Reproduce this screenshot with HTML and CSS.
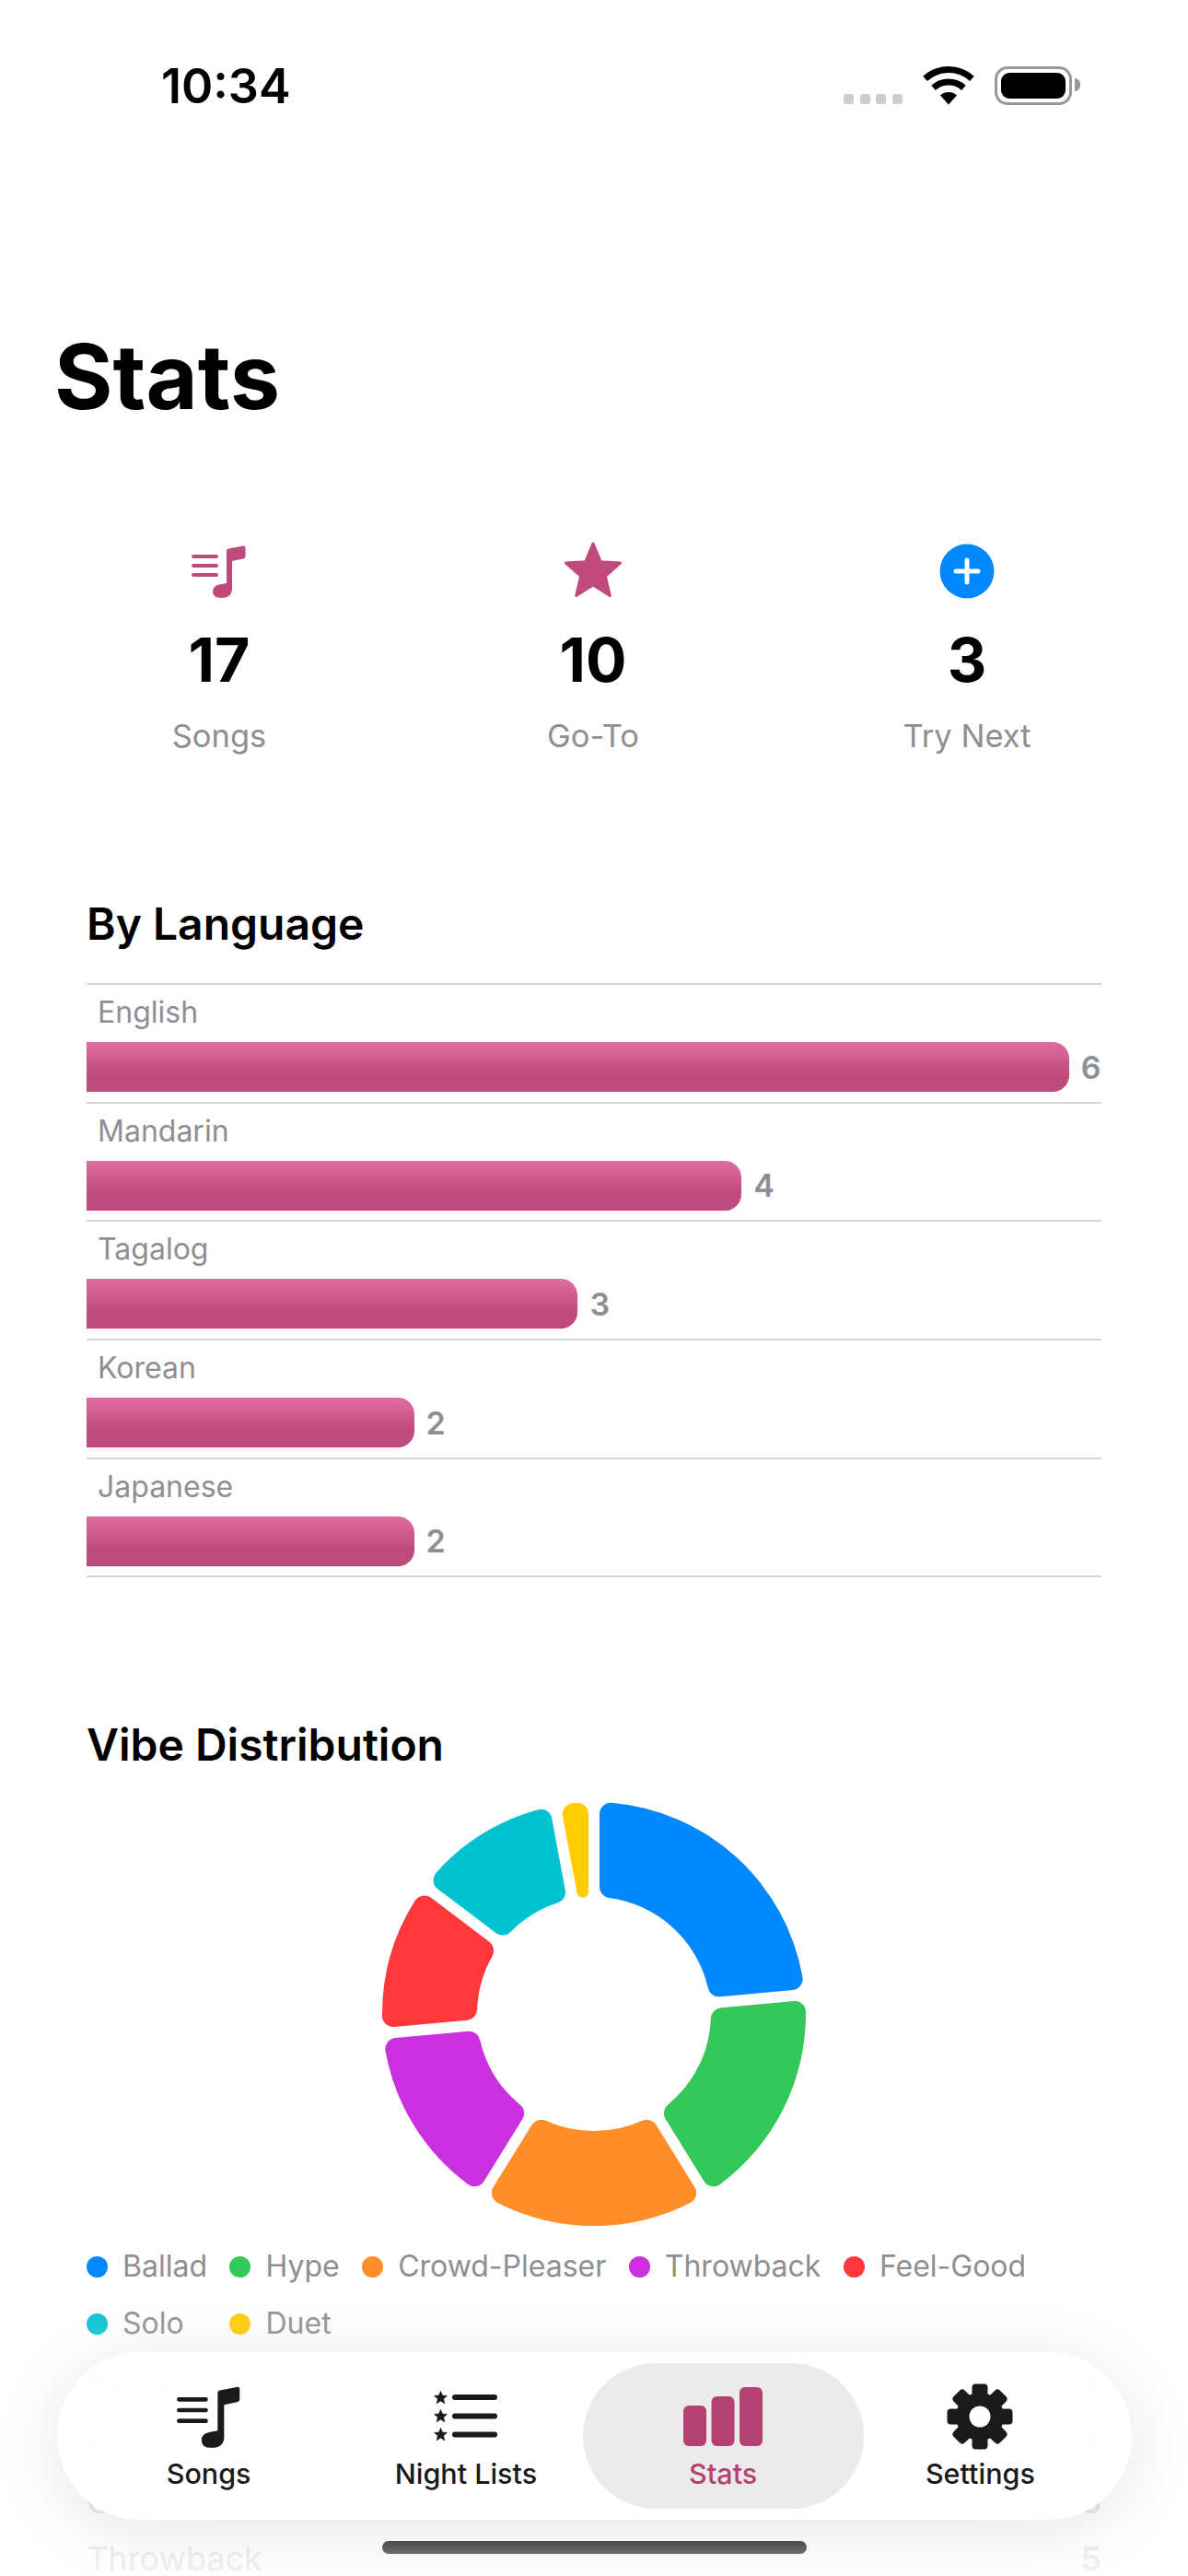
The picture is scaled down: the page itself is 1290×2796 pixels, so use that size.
FILE: index.html
```html
<!DOCTYPE html>
<html lang="en">
	<head>
		<meta charset="UTF-8" />
		<title>Stats</title>
		<link rel="stylesheet" href="styles.css">
	</head>
	<body>
		<svg class="defs" width="0" height="0">
			<symbol id="i-music" viewBox="0 0 60 60">
				<path d="M2 14H27M2 24H27M2 34H27" fill="none" stroke="currentColor" stroke-width="4" stroke-linecap="round" />
				<path d="M38 8Q38 6 40 5.6L56 2.5Q58.500 2 58.500 4.500V14Q58.500 16 56 16.500L44 19V49Q44 59 32 59Q23 59 23 52Q23 46 30 44.500L38 43Z" fill="currentColor" />
			</symbol>
			<symbol id="i-star" viewBox="0 0 64 64">
				<path d="M32 2L40.200 21.700L61.500 23.100L45.300 37.300L50.300 58.500L32 47L13.700 58.500L18.700 37.300L2.500 23.100L23.800 21.700Z" fill="currentColor" stroke="currentColor" stroke-width="3" stroke-linejoin="round" />
			</symbol>
		</svg>

		<div class="screen">
			<div class="status">
				<span class="time">10:34</span>
				<div class="status-icons">
					<div class="signal"><i></i><i></i><i></i><i></i></div>
					<svg class="wifi" width="56" height="42" viewBox="0 0 56 42">
						<path d="M2.600 13.300A38 38 0 0 1 53.400 13.300" fill="none" stroke="#000" stroke-width="7" />
						<path d="M11.600 23.300A24.500 24.500 0 0 1 44.400 23.300" fill="none" stroke="#000" stroke-width="7" />
						<path d="M28 41.500L19 31.500A13.500 13.500 0 0 1 37 31.500Z" />
					</svg>
					<div class="battery"><div class="battery-fill"></div></div>
				</div>
			</div>

			<h1>Stats</h1>

			<div class="totals">
				<div class="total">
					<svg class="total-icon pink" width="60" height="60"><use href="#i-music" /></svg>
					<div class="total-num">17</div>
					<div class="total-label">Songs</div>
				</div>
				<div class="total">
					<svg class="total-icon pink" width="64" height="64"><use href="#i-star" /></svg>
					<div class="total-num">10</div>
					<div class="total-label">Go-To</div>
				</div>
				<div class="total">
					<svg class="total-icon" width="60" height="60" viewBox="0 0 60 60">
						<circle cx="30" cy="30" r="29.500" fill="#0088ff" />
						<path d="M30 18V42M18 30H42" stroke="#fff" stroke-width="5" stroke-linecap="round" />
					</svg>
					<div class="total-num">3</div>
					<div class="total-label">Try Next</div>
				</div>
			</div>

			<section class="section lang">
				<h2>By Language</h2>
				<div class="lang-list">
					<div class="lang-row">
						<div class="lang-name">English</div>
						<div class="lang-bar"><div class="bar" style="--n:6"></div><span>6</span></div>
					</div>
					<div class="lang-row">
						<div class="lang-name">Mandarin</div>
						<div class="lang-bar"><div class="bar" style="--n:4"></div><span>4</span></div>
					</div>
					<div class="lang-row">
						<div class="lang-name">Tagalog</div>
						<div class="lang-bar"><div class="bar" style="--n:3"></div><span>3</span></div>
					</div>
					<div class="lang-row">
						<div class="lang-name">Korean</div>
						<div class="lang-bar"><div class="bar" style="--n:2"></div><span>2</span></div>
					</div>
					<div class="lang-row">
						<div class="lang-name">Japanese</div>
						<div class="lang-bar"><div class="bar" style="--n:2"></div><span>2</span></div>
					</div>
				</div>
			</section>

			<section class="section vibe">
				<h2>Vibe Distribution</h2>
				<div class="donut-wrap">
					<svg id="donut" width="480" height="480" viewBox="-240 -240 480 480"></svg>
				</div>
				<div class="legend">
					<div class="legend-item"><i class="c-ballad"></i>Ballad</div>
					<div class="legend-item"><i class="c-hype"></i>Hype</div>
					<div class="legend-item"><i class="c-crowd"></i>Crowd-Pleaser</div>
					<div class="legend-item"><i class="c-throwback"></i>Throwback</div>
					<div class="legend-item"><i class="c-feel"></i>Feel-Good</div>
					<div class="legend-item"><i class="c-solo"></i>Solo</div>
					<div class="legend-item"><i class="c-duet"></i>Duet</div>
				</div>
				<div class="vibe-list">
					<div class="vibe-row"><span>Ballad</span><span>8</span></div>
					<div class="vibe-row"><span>Hype</span><span>6</span></div>
					<div class="vibe-row"><span>Crowd-Pleaser</span><span>5</span></div>
					<div class="vibe-row"><span>Throwback</span><span>5</span></div>
				</div>
			</section>

			<div class="fade"></div>

			<nav class="tabbar">
				<a class="tab">
					<svg class="tab-icon" width="70" height="70"><use href="#i-music" /></svg>
					<span>Songs</span>
				</a>
				<a class="tab">
					<svg class="tab-icon" width="70" height="70" viewBox="0 0 70 70">
						<use href="#i-star" x="0" y="7" width="15" height="15" />
						<use href="#i-star" x="0" y="27" width="15" height="15" />
						<use href="#i-star" x="0" y="47" width="15" height="15" />
						<path d="M23 14H66M23 34.500H66M23 54.500H66" stroke="currentColor" stroke-width="6" stroke-linecap="round" />
					</svg>
					<span>Night Lists</span>
				</a>
				<a class="tab active">
					<svg class="tab-icon" width="86" height="70" viewBox="0 0 86 70">
						<rect x="0" y="23" width="25" height="44" rx="6" />
						<rect x="30.500" y="13" width="25" height="54" rx="6" />
						<rect x="61" y="3" width="25" height="64" rx="6" />
					</svg>
					<span>Stats</span>
				</a>
				<a class="tab">
					<svg class="tab-icon" width="72" height="72" viewBox="-36 -36 72 72">
						<circle r="26" />
						<rect x="-8.500" y="-35.500" width="17" height="16" rx="4" />
						<rect x="-8.500" y="-35.500" width="17" height="16" rx="4" transform="rotate(45)" />
						<rect x="-8.500" y="-35.500" width="17" height="16" rx="4" transform="rotate(90)" />
						<rect x="-8.500" y="-35.500" width="17" height="16" rx="4" transform="rotate(135)" />
						<rect x="-8.500" y="-35.500" width="17" height="16" rx="4" transform="rotate(180)" />
						<rect x="-8.500" y="-35.500" width="17" height="16" rx="4" transform="rotate(225)" />
						<rect x="-8.500" y="-35.500" width="17" height="16" rx="4" transform="rotate(270)" />
						<rect x="-8.500" y="-35.500" width="17" height="16" rx="4" transform="rotate(315)" />
						<circle r="11.500" fill="#fff" />
					</svg>
					<span>Settings</span>
				</a>
			</nav>

			<div class="home-bar"></div>
		</div>

		<script src="chart.js"></script>
	</body>
</html>
```

FILE: styles.css
```css
* {
	box-sizing: border-box;
}
body {
	margin: 0;
	background: #fff;
	font-family: Inter, "Liberation Sans", sans-serif;
	color: #000;
}
.defs {
	position: absolute;
}
.screen {
	position: relative;
	width: 1290px;
	height: 2796px;
	overflow: hidden;
}

/* status bar */
.status {
	display: flex;
	justify-content: space-between;
	align-items: center;
	height: 190px;
	padding: 0 126px 4px 175px;
}
.time {
	font-size: 52px;
	font-weight: 600;
}
.status-icons {
	display: flex;
	align-items: flex-end;
}
.signal {
	display: flex;
	gap: 6.6px;
	margin-right: 22px;
	padding-bottom: 1px;
}
.signal i {
	width: 11px;
	height: 11px;
	border-radius: 3px;
	background: #ccc;
}
.wifi {
	margin-right: 22px;
}
.battery {
	position: relative;
	width: 84px;
	height: 42px;
	padding: 4px;
	border: 3.5px solid #999;
	border-radius: 14px;
}
.battery::after {
	content: "";
	position: absolute;
	right: -11.500px;
	top: 10px;
	width: 6px;
	height: 14px;
	border-radius: 0 7px 7px 0;
	background: #999;
}
.battery-fill {
	height: 100%;
	border-radius: 9px;
	background: #000;
}

h1 {
	margin: 164px 0 0 59px;
	font-size: 97px;
	line-height: 110px;
	font-weight: 700;
}

/* totals */
.totals {
	display: grid;
	grid-template-columns: repeat(3, 406px);
	margin: 124px 0 0 35px;
}
.total {
	display: flex;
	flex-direction: column;
	align-items: center;
}
.total-icon {
	display: block;
	height: 64px;
}
.pink {
	color: #bf4a7b;
}
.total-num {
	margin-top: 26px;
	font-size: 66px;
	line-height: 76px;
	font-weight: 700;
}
.total-label {
	margin-top: 23px;
	font-size: 34.500px;
	line-height: 44px;
	color: #8e8e93;
}

/* sections */
.section {
	padding: 0 94px;
}
h2 {
	margin: 0;
	font-size: 48px;
	line-height: 58px;
	font-weight: 600;
}
.lang {
	margin-top: 153px;
}
.lang-list {
	margin-top: 35px;
	border-bottom: 2px solid #d6d6d6;
}
.lang-row {
	height: 128.700px;
	padding: 10px 0 0;
	border-top: 2px solid #d6d6d6;
}
.lang-name {
	padding-left: 12px;
	font-size: 32px;
	line-height: 40px;
	color: #8e8e93;
}
.lang-bar {
	display: flex;
	align-items: center;
	gap: 13px;
	margin-top: 12px;
	font-size: 34px;
	font-weight: 600;
	color: #8e8e93;
}
.bar {
	width: calc(var(--n) * 177.800px);
	height: 54px;
	border-radius: 0 18px 18px 0;
	border-bottom: 1px solid #c83a72;
	background: linear-gradient(#df6e9e, #bf4a7c 68%);
}

/* vibes */
.vibe {
	margin-top: 153px;
}
.donut-wrap {
	display: flex;
	justify-content: center;
	margin: 23px 0 0;
	height: 480px;
}
.legend {
	display: grid;
	grid-template-columns: repeat(5, max-content);
	column-gap: 24.500px;
	row-gap: 22px;
	margin-top: 14px;
}
.legend-item {
	display: flex;
	align-items: center;
	gap: 16px;
	font-size: 32px;
	line-height: 40px;
	color: #8e8e93;
}
.legend-item i {
	width: 23px;
	height: 23px;
	border-radius: 50%;
}
.c-ballad { background: #0088ff; }
.c-hype { background: #34c759; }
.c-crowd { background: #ff8d28; }
.c-throwback { background: #cb30e0; }
.c-feel { background: #ff383c; }
.c-solo { background: #00c3d0; }
.c-duet { background: #ffcc00; }

.vibe-list {
	margin-top: 31px;
}
.vibe-row {
	display: flex;
	justify-content: space-between;
	height: 62px;
	font-size: 36px;
	line-height: 36px;
	color: #8e8e93;
}
.vibe-row span:last-child {
	font-weight: 600;
}

/* fade + glass tab bar sit over the scrolled content */
.fade {
	position: absolute;
	left: 0;
	right: 0;
	bottom: 0;
	height: 316px;
	background: linear-gradient(rgba(255, 255, 255, 0), rgba(255, 255, 255, 0.15) 19%, rgba(255, 255, 255, 0.7) 38%, rgba(255, 255, 255, 0.88));
}
.tabbar {
	position: absolute;
	left: 62px;
	top: 2553px;
	width: 1167px;
	height: 182px;
	padding: 0 25px;
	display: grid;
	grid-template-columns: repeat(4, 1fr);
	border-radius: 91px;
	background: rgba(255, 255, 255, 0.965);
	box-shadow: 0 10px 80px rgba(0, 0, 0, 0.1);
}
.tab {
	position: relative;
	display: flex;
	flex-direction: column;
	align-items: center;
	padding-top: 34px;
	font-size: 30.500px;
	line-height: 36px;
	font-weight: 500;
	color: #1a1a1a;
}
.tab-icon {
	position: relative;
	display: block;
	fill: currentColor;
	height: 72px;
}
.tab span {
	position: relative;
	margin-top: 8px;
}
.tab.active {
	color: #b54173;
}
.tab.active::before {
	content: "";
	position: absolute;
	left: -13px;
	right: -13px;
	top: 12px;
	height: 158px;
	border-radius: 79px;
	background: #ebebeb;
}
.home-bar {
	position: absolute;
	left: 415px;
	top: 2758px;
	width: 461px;
	height: 14px;
	border-radius: 7px;
	background: linear-gradient(#4a4a4a, #6e6e6e);
}
```

FILE: chart.js
```js
// vibe counts, clockwise from 12 o'clock
const vibes = [
	{ n: 8, color: "#0088ff" },
	{ n: 6, color: "#34c759" },
	{ n: 6, color: "#ff8d28" },
	{ n: 5, color: "#cb30e0" },
	{ n: 4, color: "#ff383c" },
	{ n: 4, color: "#00c3d0" },
	{ n: 1, color: "#ffcc00" },
];

const R = 230;
const r = 127;
const GAP = 6; // half the gap between two slices
const CORNER = 12;

function pt(rad, ang, off) {
	off = off || 0;
	return [
		rad * Math.sin(ang) + off * Math.cos(ang),
		-rad * Math.cos(ang) + off * Math.sin(ang),
	];
}

function s(p) {
	return p[0].toFixed(2) + " " + p[1].toFixed(2);
}

function slice(a, b) {
	const sinH = Math.sin((b - a) / 2);
	const cO = Math.min(CORNER, (R * sinH - GAP) / (1 + sinH));
	const cI = Math.min(CORNER, (r * sinH - GAP) / (1 - sinH));

	const rcO = R - cO;
	const rcI = r + cI;
	const angO = Math.asin((GAP + cO) / rcO);
	const angI = Math.asin((GAP + cI) / rcI);
	const dO = Math.sqrt(rcO * rcO - (GAP + cO) * (GAP + cO));
	const dI = Math.sqrt(rcI * rcI - (GAP + cI) * (GAP + cI));

	return [
		"M" + s(pt(dI, a, GAP)),
		"L" + s(pt(dO, a, GAP)),
		`A${cO} ${cO} 0 0 1 ` + s(pt(R, a + angO)),
		`A${R} ${R} 0 0 1 ` + s(pt(R, b - angO)),
		`A${cO} ${cO} 0 0 1 ` + s(pt(dO, b, -GAP)),
		"L" + s(pt(dI, b, -GAP)),
		`A${cI} ${cI} 0 0 1 ` + s(pt(r, b - angI)),
		`A${r} ${r} 0 0 0 ` + s(pt(r, a + angI)),
		`A${cI} ${cI} 0 0 1 ` + s(pt(dI, a, GAP)),
		"Z",
	].join("");
}

const total = vibes.reduce((sum, v) => sum + v.n, 0);
let start = 0;
let html = "";
vibes.forEach((v) => {
	const end = start + (v.n / total) * Math.PI * 2;
	html += `<path d="${slice(start, end)}" fill="${v.color}" />`;
	start = end;
});
document.getElementById("donut").innerHTML = html;
```
